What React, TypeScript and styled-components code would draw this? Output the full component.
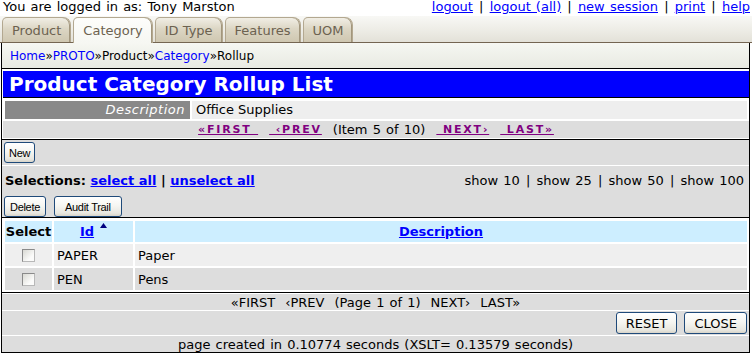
import React from 'react'
import styled, { createGlobalStyle } from 'styled-components'

const GlobalStyle = createGlobalStyle`
  html, body { margin: 0; padding: 0; background: #fff; }
  body {
    font-family: "DejaVu Sans", Verdana, sans-serif;
    font-size: 13px;
    color: #000;
  }
  a { color: #0000ff; }
`

const Page = styled.div`
  width: 752px;
`

const TopBar = styled.div`
  display: flex;
  justify-content: space-between;
  height: 16px;
  line-height: 14px;
  padding: 0 2px 0 3px;
  white-space: nowrap;
  word-spacing: 1px;
`

// Verdana's bar is wider than DejaVu's, so pad it a little
const Sep = styled.span`
  margin: 0 1px;
`

const TabBar = styled.div`
  display: flex;
  align-items: flex-end;
  gap: 2px;
  height: 27px;
  box-sizing: border-box;
  padding-left: 2px;
  background: linear-gradient(#f8f8f5, #ecebe4 60%, #e3e1d8);
  border-bottom: 1px solid #746551;
`

const Tab = styled.div<{ $active?: boolean }>`
  height: ${p => (p.$active ? 26 : 25)}px;
  margin-bottom: ${p => (p.$active ? -1 : 0)}px;
  box-sizing: border-box;
  padding: 0 9px;
  display: flex;
  align-items: center;
  border: 1px solid #b3a890;
  border-bottom: none;
  border-radius: 5px 8px 0 0;
  background: ${p => (p.$active
    ? 'linear-gradient(#fdfdfb, #f6f7f2)'
    : 'linear-gradient(#f1eee5, #dcd6c4 45%, #cfc7b0)')};
  box-shadow: inset -1px 0 #a2967c;
  color: #6c6250;
  font-size: 13px;
`

const Crumbs = styled.div`
  margin: 0 2px 0 1px;
  height: 26px;
  box-sizing: border-box;
  border: 1px solid #000;
  border-top: none;
  background: linear-gradient(#f6f7f2, #e8eae2);
  padding-left: 8px;
  display: flex;
  align-items: center;
  font-size: 12px;
  a { text-decoration: none; }
`

const Panel = styled.div`
  margin: 0 2px 0 1px;
  border: 1px solid #000;
  border-top: none;
  background: #fff;
  padding-top: 2px;
`

const Title = styled.h1`
  margin: 0 0 0 1px;
  height: 26px;
  background: #0000ff;
  color: #fff;
  border-bottom: 1px solid #000;
  font: bold 20px/26px "DejaVu Sans", Verdana, sans-serif;
  padding-left: 6px;
`

const Detail = styled.div`
  display: grid;
  grid-template-columns: 185px 1fr;
  gap: 2px;
  padding: 3px 2px 2px 3px;
`

const DetailLabel = styled.div`
  height: 18px;
  line-height: 18px;
  background: #898989;
  color: #fff;
  font-style: italic;
  letter-spacing: 0.5px;
  text-align: right;
  padding-right: 5px;
`

const DetailValue = styled.div`
  height: 18px;
  line-height: 18px;
  background: #eee;
  padding-left: 4px;
`

const ScrollNav = styled.div`
  height: 17px;
  margin: 0 0 1px 1px;
  background: #ddd;
  display: flex;
  justify-content: center;
  align-items: center;
  gap: 11px;
  white-space: pre;
  word-spacing: 1px;
`

const NavLink = styled.a`
  color: #800080;
  font-weight: bold;
  font-size: 11px;
  letter-spacing: 1.8px;
  text-decoration: underline;
`

const Actions = styled.div`
  border-top: 1px solid #000;
  background: #ddd;
`

const ButtonBar = styled.div<{ $h: number; $top?: boolean }>`
  height: ${p => p.$h}px;
  display: flex;
  align-items: ${p => (p.$top ? 'flex-start' : 'center')};
  gap: 8px;
  padding: ${p => (p.$top ? '2px' : '0')} 2px 0;
  box-sizing: border-box;
`

const Separated = styled.div`
  border-bottom: 1px solid #fff;
`

const Button = styled.button<{ $pad?: number; $big?: boolean }>`
  height: ${p => (p.$big ? 22 : 21)}px;
  padding: 0 ${p => p.$pad ?? 4}px;
  margin: 0;
  font: ${p => (p.$big ? '13px "DejaVu Sans", Verdana' : '11px "Liberation Sans", Arial')}, sans-serif;
  letter-spacing: ${p => (p.$big ? 0 : -0.3)}px;
  color: #000;
  border: 1px solid #1f4a7a;
  border-radius: 3px;
  background: linear-gradient(#ffffff, #f6f6f2 45%, #e8e7e0 85%, #d8d4c9);
`

const Selections = styled.div`
  height: 28px;
  padding: 0 5px 0 3px;
  display: flex;
  justify-content: space-between;
  align-items: center;
  white-space: pre;
  a { font-weight: bold; }
`

const ShowList = styled.span`
  word-spacing: 1px;
`

const Grid = styled.div`
  border-top: 1px solid #000;
  display: grid;
  grid-template-columns: 47px 79px 1fr;
  gap: 2px;
  padding: 3px 2px 2px 3px;
  background: #fff;
`

const tones = { head: '#cdeeff', odd: '#efefef', even: '#dddddd' }

const Cell = styled.div<{ $tone: keyof typeof tones; $center?: boolean }>`
  height: ${p => (p.$tone === 'head' ? 21 : 22)}px;
  background: ${p => tones[p.$tone]};
  display: flex;
  align-items: center;
  justify-content: ${p => (p.$center ? 'center' : 'flex-start')};
  padding: 0 3px;
  font-weight: ${p => (p.$tone === 'head' ? 'bold' : 'normal')};
  a { font-weight: bold; }
`

const SortArrow = styled.svg`
  align-self: flex-start;
  margin: 2px 0 0 6px;
`

const CheckBox = styled.span`
  width: 11px;
  height: 11px;
  border: 1px solid #8a8a8a;
  border-right-color: #b8b8b8;
  border-bottom-color: #b8b8b8;
  background: linear-gradient(135deg, #d9d9d3, #fbfbfa 70%);
`

const Footer = styled.div`
  border-top: 1px solid #000;
  padding-top: 1px;
`

const FooterRow = styled.div<{ $h: number; $end?: boolean; $last?: boolean }>`
  height: ${p => p.$h}px;
  background: #ddd;
  border-bottom: ${p => (p.$last ? 'none' : '1px solid #fff')};
  display: flex;
  align-items: center;
  justify-content: ${p => (p.$end ? 'flex-end' : 'center')};
  gap: ${p => (p.$end ? 7 : 10)}px;
  padding-right: ${p => (p.$end ? 2 : 0)}px;
  white-space: pre;
  word-spacing: 1px;
`

const topLinks = ['logout', 'logout (all)', 'new session', 'print', 'help']
const tabs = ['Product', 'Category', 'ID Type', 'Features', 'UOM']
const pageSizes = [10, 25, 50, 100]
const rows = [
  { id: 'PAPER', desc: 'Paper' },
  { id: 'PEN', desc: 'Pens' },
]

export default function App() {
  return (
    <Page>
      <GlobalStyle />
      <TopBar>
        <span>You are logged in as: Tony Marston</span>
        <span>
          {topLinks.map((l, i) => (
            <React.Fragment key={l}>
              {i > 0 && <> <Sep>|</Sep> </>}
              <a href="#">{l}</a>
            </React.Fragment>
          ))}
        </span>
      </TopBar>

      <TabBar>
        {tabs.map(t => <Tab key={t} $active={t === 'Category'}>{t}</Tab>)}
      </TabBar>

      <Crumbs>
        <a href="#">Home</a>»<a href="#">PROTO</a>»Product»<a href="#">Category</a>»Rollup
      </Crumbs>

      <Panel>
        <Title>Product Category Rollup List</Title>
        <Detail>
          <DetailLabel>Description</DetailLabel>
          <DetailValue>Office Supplies</DetailValue>
        </Detail>
        <ScrollNav>
          <NavLink href="#">{'«FIRST\u00a0'}</NavLink>
          <NavLink href="#">{'\u00a0‹PREV'}</NavLink>
          <span>(Item 5 of 10)</span>
          <NavLink href="#">{'\u00a0NEXT›'}</NavLink>
          <NavLink href="#">{'\u00a0LAST»'}</NavLink>
        </ScrollNav>

        <Actions>
          <Separated>
            <ButtonBar $h={25}>
              <Button $pad={4}>New</Button>
            </ButtonBar>
          </Separated>
          <Selections>
            <span>
              <b>Selections: </b><a href="#">select all</a><b> | </b><a href="#">unselect all</a>
            </span>
            <ShowList>
              {pageSizes.map((n, i) => (
                <React.Fragment key={n}>
                  {i > 0 && <> <Sep>|</Sep> </>}
                  show {n}
                </React.Fragment>
              ))}
            </ShowList>
          </Selections>
          <ButtonBar $h={23} $top>
            <Button $pad={5}>Delete</Button>
            <Button $pad={10}>Audit Trail</Button>
          </ButtonBar>
        </Actions>

        <Grid>
          <Cell $tone="head" $center>Select</Cell>
          <Cell $tone="head" $center>
            <a href="#">Id</a>
            <SortArrow width="7" height="5" viewBox="0 0 7 5">
              <path d="M3.5 0 L7 5 L0 5 Z" fill="#000080" />
            </SortArrow>
          </Cell>
          <Cell $tone="head" $center><a href="#">Description</a></Cell>
          {rows.map((r, i) => {
            const tone = i % 2 === 0 ? 'odd' : 'even'
            return (
              <React.Fragment key={r.id}>
                <Cell $tone={tone} $center><CheckBox /></Cell>
                <Cell $tone={tone}>{r.id}</Cell>
                <Cell $tone={tone}>{r.desc}</Cell>
              </React.Fragment>
            )
          })}
        </Grid>

        <Footer>
          <FooterRow $h={16}>
            <span>«FIRST</span>
            <span>‹PREV</span>
            <span>(Page 1 of 1)</span>
            <span>NEXT›</span>
            <span>LAST»</span>
          </FooterRow>
          <FooterRow $h={24} $end>
            <Button $big $pad={9}>RESET</Button>
            <Button $big $pad={9}>CLOSE</Button>
          </FooterRow>
          <FooterRow $h={16} $last>
            page created in 0.10774 seconds (XSLT= 0.13579 seconds)
          </FooterRow>
        </Footer>
      </Panel>
    </Page>
  )
}
